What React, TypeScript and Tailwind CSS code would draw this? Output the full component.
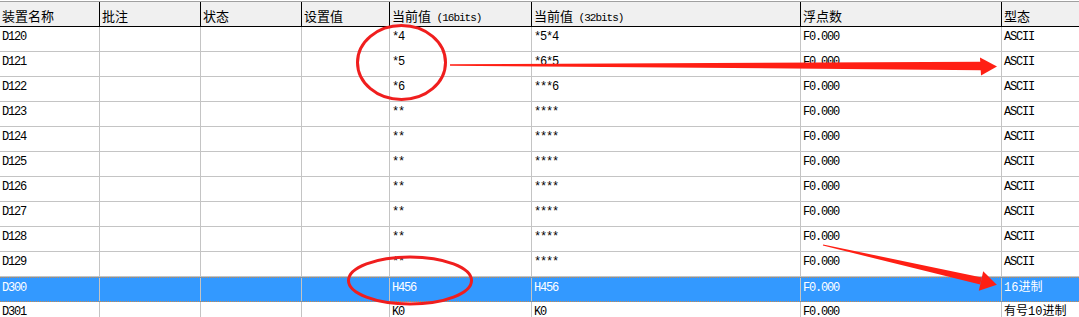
import React from "react";

type Row = {
  name: string;
  v16: string;
  v32: string;
  float: string;
  kind: string;
  selected?: boolean;
};

// column widths include the 1px divider on the right
const COLS = [
  { key: "name", label: "装置名称", w: "w-[100px]" },
  { key: "note", label: "批注", w: "w-[101px]" },
  { key: "state", label: "状态", w: "w-[101px]" },
  { key: "set", label: "设置值", w: "w-[88px]" },
  { key: "v16", label: "当前值", sub: " (16bits)", w: "w-[142px]" },
  { key: "v32", label: "当前值", sub: " (32bits)", w: "w-[269px]" },
  { key: "float", label: "浮点数", w: "w-[201px]" },
  { key: "kind", label: "型态", w: "flex-1" },
];

const ROWS: Row[] = [
  { name: "D120", v16: "*4", v32: "*5*4", float: "F0.000", kind: "ASCII" },
  { name: "D121", v16: "*5", v32: "*6*5", float: "F0.000", kind: "ASCII" },
  { name: "D122", v16: "*6", v32: "***6", float: "F0.000", kind: "ASCII" },
  ...["D123", "D124", "D125", "D126", "D127", "D128", "D129"].map((name) => ({
    name,
    v16: "**",
    v32: "****",
    float: "F0.000",
    kind: "ASCII",
  })),
  { name: "D300", v16: "H456", v32: "H456", float: "F0.000", kind: "16进制", selected: true },
  { name: "D301", v16: "K0", v32: "K0", float: "F0.000", kind: "有号10进制" },
];

const MONO = "font-['Liberation_Mono','Noto_Sans_CJK_SC',monospace]";
const CJK = "font-['Noto_Sans_CJK_SC','Liberation_Sans',sans-serif]";

function Cell({ w, last, children, cjk }: { w: string; last?: boolean; children?: React.ReactNode; cjk?: boolean }) {
  return (
    <div
      className={`${w} shrink-0 h-full pl-[2px] pt-[4px] overflow-hidden whitespace-nowrap ${
        last ? "" : "border-r border-[#c4c4c4]"
      } ${cjk ? "text-[12px] leading-[13px]" : "text-[12px] leading-[13px] tracking-[-1.2px]"}`}
    >
      {children}
    </div>
  );
}

function Header() {
  return (
    <div className="bg-white pt-px">
      <div className="h-[26px] flex bg-[#f0f0f0] border-t border-[#a0a0a0] border-b border-b-black">
        {COLS.map((c, i) => (
          <div
            key={c.key}
            className={`${c.w} shrink-0 h-full pl-[2px] pt-[1px] whitespace-nowrap ${
              i < COLS.length - 1 ? "border-r border-black" : ""
            }`}
          >
            <span className={`${CJK} text-[13px] leading-[18px] text-black`}>{c.label}</span>
            {c.sub && <span className={`${MONO} text-[11px] tracking-[-1px] text-black`}>{c.sub}</span>}
          </div>
        ))}
      </div>
    </div>
  );
}

function DataRow({ row }: { row: Row }) {
  const values = [row.name, "", "", "", row.v16, row.v32, row.float, row.kind];
  return (
    <div
      className={`h-[25px] flex ${MONO} ${
        row.selected
          ? "bg-[#3399ff] text-white border-y border-dotted border-[#c98a4b]"
          : "bg-white text-black border-b border-[#c4c4c4]"
      }`}
    >
      {COLS.map((c, i) => (
        <Cell key={c.key} w={c.w} last={i === COLS.length - 1} cjk={/[^\x00-\x7f]/.test(values[i])}>
          {values[i]}
        </Cell>
      ))}
    </div>
  );
}

// red markup drawn on top of the grid
function Markup() {
  return (
    <svg className="absolute inset-0 pointer-events-none" width="1079" height="317" viewBox="0 0 1079 317">
      <ellipse cx="401.5" cy="62.5" rx="44" ry="37" fill="none" stroke="#f01e1e" strokeWidth="3" />
      <polygon points="450,64.3 981,61.8 981,70.2 450,65.7" fill="#ff1f14" />
      <polygon points="980,57.5 997,66.5 981,75.5" fill="#ff1f14" />

      <ellipse cx="410" cy="280.5" rx="61.5" ry="23.5" fill="none" stroke="#f01e1e" strokeWidth="3" />
      <polygon points="823.1,244.4 981.8,277.6 980.2,284.4 822.9,245.6" fill="#ff1f14" />
      <polygon points="983.2,271.2 996.8,284.8 978.8,290.8" fill="#ff1f14" />
    </svg>
  );
}

export default function App() {
  return (
    <div className="relative w-[1079px] h-[317px] overflow-hidden bg-white">
      <Header />
      {ROWS.map((r) => (
        <DataRow key={r.name} row={r} />
      ))}
      <Markup />
    </div>
  );
}
